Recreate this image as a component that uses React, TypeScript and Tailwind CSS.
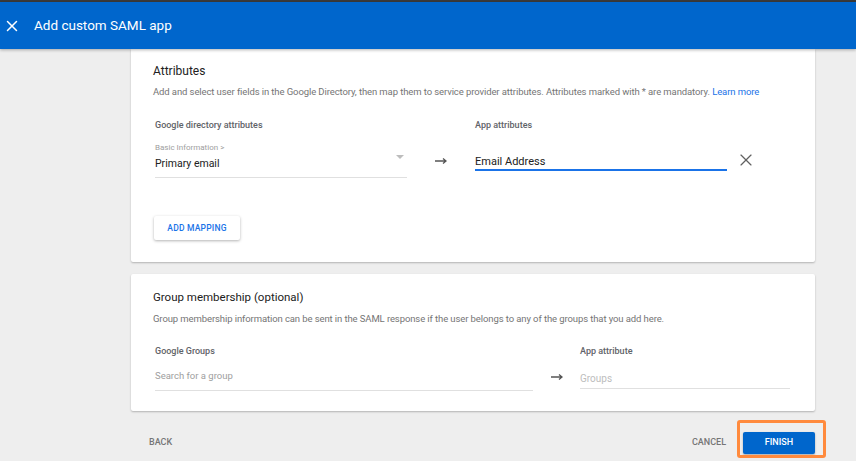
import { X } from 'lucide-react';

function Arrow() {
  return (
    <svg width="12" height="8" viewBox="0 0 12 8" className="text-[#555]">
      <path d="M0 4h10M8 1.5L11 4 8 6.5" stroke="currentColor" strokeWidth="1.3" fill="none" />
    </svg>
  );
}

export default function App() {
  return (
    <div className="h-[461px] w-[856px] overflow-hidden bg-[#eeeeee] font-['Roboto',sans-serif] flex flex-col">
      <div className="h-[2px] shrink-0 bg-[#3a3a3a]" />
      <header className="h-[47px] shrink-0 bg-[#0066cc] flex items-center text-white shadow-[0_1px_3px_rgba(0,0,0,0.3)] relative z-10">
        <X className="ml-[3px] w-[18px] h-[18px]" strokeWidth={2} />
        <span className="ml-[13px] text-[13.5px]">Add custom SAML app</span>
      </header>

      <main className="flex-1 pl-[131px] pr-[41px] flex flex-col">
        {/* Attributes card */}
        <section className="h-[213px] shrink-0 bg-white shadow-[0_1px_2px_rgba(0,0,0,0.25)] pt-[14px] pl-[22px] rounded-b-[2px]">
          <h2 className="h-[16px] leading-[16px] text-[12px] text-[#212121]">Attributes</h2>
          <p className="mt-[6px] h-[14px] leading-[14px] text-[9.5px] text-[#757575] tracking-[-0.1px]">
            Add and select user fields in the Google Directory, then map them to service provider attributes. Attributes marked with * are mandatory.{' '}
            <span className="text-[#1a73e8]">Learn more</span>
          </p>

          <div className="mt-[19px] flex">
            <div className="w-[252px] ml-[2px]">
              <div className="h-[14px] leading-[14px] text-[9px] font-medium text-[#5f6368]">Google directory attributes</div>
              <div className="mt-[11px] border-b border-[#e0e0e0] relative">
                <div className="h-[10px] leading-[10px] text-[8px] text-[#9e9e9e]">Basic Information &gt;</div>
                <div className="mt-[4px] h-[14px] leading-[14px] text-[10.5px] text-[#212121] mb-[6px]">Primary email</div>
                <div className="absolute right-[3px] top-[12px] w-0 h-0 border-l-[4px] border-r-[4px] border-t-[4px] border-l-transparent border-r-transparent border-t-[#bdbdbd]" />
              </div>
            </div>
            <div className="w-[68px] flex justify-center pt-[39px]">
              <Arrow />
            </div>
            <div className="w-[252px]">
              <div className="h-[14px] leading-[14px] text-[9px] font-medium text-[#5f6368]">App attributes</div>
              <div className="mt-[23px] h-[14px] leading-[14px] text-[11px] text-[#212121]">Email Address</div>
              <div className="h-[2px] bg-[#1a73e8]" />
            </div>
            <div className="ml-[9px] pt-[32px] text-[#616161]">
              <X className="w-[20px] h-[20px]" strokeWidth={1.4} />
            </div>
          </div>

          <button className="mt-[38px] ml-[1px] h-[24px] w-[86px] rounded-[2px] bg-white shadow-[0_1px_3px_rgba(0,0,0,0.3)] text-[8.5px] font-medium text-[#1a73e8] tracking-[0.2px]">
            ADD MAPPING
          </button>
        </section>

        {/* Group membership card */}
        <section className="mt-[12px] h-[137px] shrink-0 bg-white shadow-[0_1px_2px_rgba(0,0,0,0.25)] rounded-[2px] pt-[15px] pl-[22px]">
          <h2 className="h-[16px] leading-[16px] text-[11.5px] text-[#212121]">Group membership (optional)</h2>
          <p className="mt-[7px] h-[14px] leading-[14px] text-[9.5px] text-[#757575] tracking-[-0.1px]">
            Group membership information can be sent in the SAML response if the user belongs to any of the groups that you add here.
          </p>

          <div className="mt-[18px] flex">
            <div className="w-[378px] ml-[2px]">
              <div className="h-[14px] leading-[14px] text-[9px] font-medium text-[#5f6368]">Google Groups</div>
              <div className="mt-[11px] h-[14px] leading-[14px] text-[9.5px] text-[#9e9e9e]">Search for a group</div>
              <div className="mt-[7px] h-px bg-[#e0e0e0]" />
            </div>
            <div className="w-[47px] flex justify-center pt-[29px]">
              <Arrow />
            </div>
            <div className="w-[210px]">
              <div className="h-[14px] leading-[14px] text-[9px] font-medium text-[#5f6368]">App attribute</div>
              <div className="mt-[14px] h-[14px] leading-[14px] text-[10px] text-[#bdbdbd]">Groups</div>
              <div className="mt-[2px] h-px bg-[#e0e0e0]" />
            </div>
          </div>
        </section>

        {/* Footer */}
        <footer className="flex-1 flex items-center pl-[18px] pt-[13px] relative">
          <span className="text-[9px] font-medium text-[#757575]">BACK</span>
          <span className="ml-auto text-[9px] font-medium text-[#757575]">CANCEL</span>
          <button className="ml-[17px] h-[22px] w-[72px] bg-[#0066cc] rounded-[2px] text-white text-[9px] font-medium shadow-[0_1px_2px_rgba(0,0,0,0.3)]">
            FINISH
          </button>
          <div className="absolute right-[-11px] top-[9px] w-[89px] h-[38px] border-[3px] border-[#ff8a3d] rounded-[3px] pointer-events-none" />
        </footer>
      </main>
    </div>
  );
}
